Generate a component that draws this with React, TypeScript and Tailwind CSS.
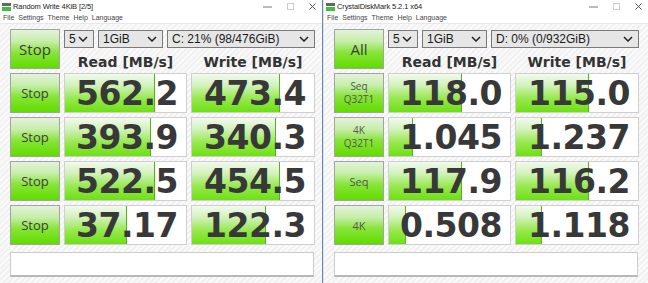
import React from "react"

interface Row {
  label: string[]
  read: string
  rp: number
  write: string
  wp: number
}

interface Win {
  title: string
  top: string
  drive: string
  rows: Row[]
}

const windows: Win[] = [
  {
    title: "Random Write 4KiB [2/5]",
    top: "Stop",
    drive: "C: 21% (98/476GiB)",
    rows: [
      { label: ["Stop"], read: "562.2", rp: 74, write: "473.4", wp: 72 },
      { label: ["Stop"], read: "393.9", rp: 71, write: "340.3", wp: 69 },
      { label: ["Stop"], read: "522.5", rp: 74, write: "454.5", wp: 72 },
      { label: ["Stop"], read: "37.17", rp: 51, write: "122.3", wp: 61 },
    ],
  },
  {
    title: "CrystalDiskMark 5.2.1 x64",
    top: "All",
    drive: "D: 0% (0/932GiB)",
    rows: [
      { label: ["Seq", "Q32T1"], read: "118.0", rp: 60, write: "115.0", wp: 60 },
      { label: ["4K", "Q32T1"], read: "1.045", rp: 20, write: "1.237", wp: 21 },
      { label: ["Seq"], read: "117.9", rp: 60, write: "116.2", wp: 60 },
      { label: ["4K"], read: "0.508", rp: 14, write: "1.118", wp: 21 },
    ],
  },
]

const greenBtn =
  "border border-[#a3a3a3] bg-[linear-gradient(to_bottom,#e4f2dc_0%,#c6eea8_30%,#86e436_60%,#62dc00_100%)] flex flex-col items-center justify-center text-[#3c3c3c] leading-[13px] font-['Open_Sans',sans-serif]"

function Chevron() {
  return (
    <svg width="10" height="6" viewBox="0 0 10 6" className="shrink-0">
      <path d="M1 1 L5 5 L9 1" fill="none" stroke="#222" strokeWidth="1.5" />
    </svg>
  )
}

function Dropdown({ text, w }: { text: string; w: string }) {
  return (
    <div className={"h-[18px] border border-[#7a7a7a] bg-[#e6e6e6] flex items-center justify-between pl-[4px] pr-[5px] text-[12px] text-[#1a1a1a] font-['Liberation_Sans',sans-serif] " + w}>
      <span>{text}</span>
      <Chevron />
    </div>
  )
}

function Cell({ value, pct }: { value: string; pct: number }) {
  return (
    <div className="relative border border-[#cfcfcf] bg-white overflow-hidden flex items-center justify-end pr-[8px]">
      <div
        className="absolute left-0 top-0 bottom-0 bg-[linear-gradient(to_bottom,#f2faee_0%,#d2f2bc_30%,#96e84c_65%,#6ee014_100%)] border-r border-[#4fb51a]"
        style={{ width: pct + "%" }}
      />
      <span className="relative text-[33px] font-bold leading-none tracking-[-0.5px] text-[#383838] font-['DejaVu_Sans',sans-serif]">
        {value}
      </span>
    </div>
  )
}

function AppIcon() {
  return (
    <svg width="9" height="8" viewBox="0 0 9 8" className="shrink-0">
      <rect x="0" y="0" width="9" height="3" fill="#5d6b5d" />
      <rect x="0" y="3" width="9" height="1" fill="#ffffff" />
      <rect x="0" y="4" width="9" height="4" fill="#3fbf3f" />
    </svg>
  )
}

function Window({ win, w }: { win: Win; w: string }) {
  return (
    <div className={"flex flex-col h-full " + w}>
      <div className="h-[13px] bg-white flex items-center pl-[2px] pr-[6px] font-['Liberation_Sans',sans-serif]">
        <AppIcon />
        <span className="ml-[2px] text-[7.5px] text-[#222] tracking-[-0.1px]">{win.title}</span>
        <div className="ml-auto flex items-center gap-[15px]">
          <svg width="9" height="6" viewBox="0 0 9 6"><path d="M0 3 H9" stroke="#777" strokeWidth="1" /></svg>
          <svg width="7" height="7" viewBox="0 0 7 7"><rect x="0.5" y="0.5" width="6" height="6" fill="none" stroke="#ccc" strokeWidth="1" /></svg>
          <svg width="7" height="7" viewBox="0 0 7 7"><path d="M0.5 0.5 L6.5 6.5 M6.5 0.5 L0.5 6.5" stroke="#555" strokeWidth="1" /></svg>
        </div>
      </div>
      <div className="h-[10px] bg-white flex items-center gap-[4px] pl-[3px] text-[7px] text-[#444] font-['Liberation_Sans',sans-serif]">
        <span>File</span>
        <span>Settings</span>
        <span>Theme</span>
        <span>Help</span>
        <span>Language</span>
      </div>
      <div className="flex-1 border-t border-[#e8e8e8] bg-[repeating-linear-gradient(135deg,#f1f1f1_0px,#f1f1f1_2px,#fafafa_2px,#fafafa_4px)] pl-[10px] pt-[5px] flex flex-col">
        <div className="flex gap-[4px]">
          <div className={greenBtn + " w-[50px] h-[40px] text-[15px]"}>{win.top}</div>
          <div className="flex flex-col w-[251px]">
            <div className="flex mt-[1px] gap-[4px]">
              <Dropdown text="5" w="w-[30px]" />
              <Dropdown text="1GiB" w="w-[65px]" />
              <Dropdown text={win.drive} w="w-[148px]" />
            </div>
            <div className="grid grid-cols-[123px_124px] gap-[4px] h-[21px] items-end text-[14px] font-bold text-[#333] font-['DejaVu_Sans',sans-serif] leading-none">
              <div className="text-center">Read [MB/s]</div>
              <div className="text-center">Write [MB/s]</div>
            </div>
          </div>
        </div>
        <div className="mt-[4px] grid grid-cols-[50px_123px_124px] auto-rows-[40px] gap-[4px]">
          {win.rows.map((r, i) => (
            <React.Fragment key={i}>
              <div className={greenBtn + (r.label.length > 1 ? " text-[10px] text-[#555]" : r.label[0] === "Stop" ? " text-[13px]" : " text-[11px] text-[#555]")}>
                {r.label.map((l) => (
                  <span key={l}>{l}</span>
                ))}
              </div>
              <Cell value={r.read} pct={r.rp} />
              <Cell value={r.write} pct={r.wp} />
            </React.Fragment>
          ))}
        </div>
        <div className="mt-[7px] w-[304px] h-[25px] bg-white border border-[#cccccc] border-b-2 border-b-[#b8b8b8]" />
      </div>
    </div>
  )
}

export default function App() {
  return (
    <div className="w-[648px] h-[283px] flex overflow-hidden bg-white">
      <Window win={windows[0]} w="w-[322px]" />
      <div className="w-[1px] h-full bg-[#5f86bd]" />
      <div className="w-[1px] h-full bg-[#e4e4e4]" />
      <Window win={windows[1]} w="w-[324px]" />
    </div>
  )
}
